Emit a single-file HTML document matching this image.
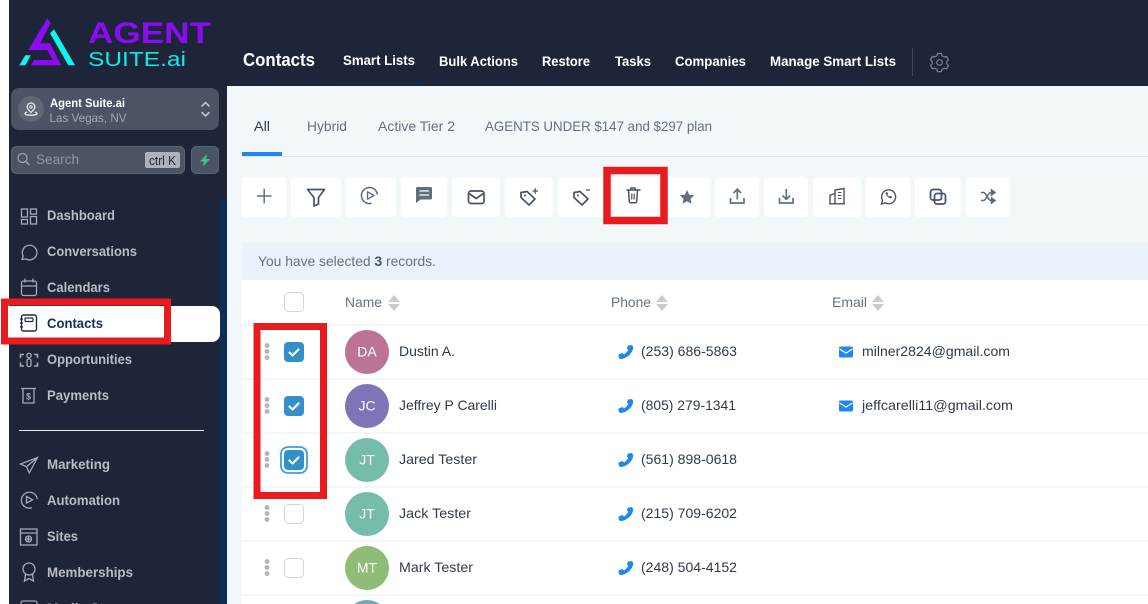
<!DOCTYPE html>
<html lang="en"><head><meta charset="utf-8"><title>Contacts</title>
<style>
html,body{margin:0;padding:0;background:#fff;width:1148px;height:604px;overflow:hidden}
svg{display:block}
text{font-family:"Liberation Sans",sans-serif}
.nav{font-size:14px;font-weight:bold;fill:#b9bcc6}
.top{font-size:14px;font-weight:bold;fill:#fff}
.tab{font-size:14px;fill:#667085}
.hd{font-size:14px;fill:#667085}
.nm{font-size:14px;fill:#2f3a4c}
.av{font-size:14px;fill:#fff;text-anchor:middle}
.si{fill:none;stroke:#a5a9b5;stroke-width:1.3}
.ti{fill:none;stroke:#475467;stroke-width:1.7;stroke-linejoin:round;stroke-linecap:round}
.btn{fill:#fff}
.cb{fill:#fff;stroke:#d0d5dd;stroke-width:1}
.ck{fill:#3490c8}
.tk{fill:none;stroke:#fff;stroke-width:2.2;stroke-linecap:round;stroke-linejoin:round}
.dot{fill:#b0b5bb}
.sep{fill:#f2f7fa}
.ph{fill:#1e88ee}
.red{fill:none;stroke:#e81c1f}
</style></head><body>
<svg width="1148" height="604" viewBox="0 0 1148 604" xmlns="http://www.w3.org/2000/svg">
<rect width="1148" height="604" fill="#fff"/>
<!-- main bg -->
<rect x="227" y="86" width="921" height="518" fill="#f2f7fa"/>
<!-- sidebar + top -->
<rect x="9" y="0" width="1139" height="86" fill="#1f2539"/>
<rect x="9" y="0" width="218" height="604" fill="#1f2539"/>
<rect x="220" y="198" width="7" height="406" fill="#0b2e55"/>
<!-- logo -->
<polygon points="47.3,18.3 50.7,23.3 40,43.3 50,43.3 61,65.3 30.7,65.3 34,60 52.7,60 47.3,50 28.3,50" fill="#8a0cf5"/>
<polygon points="19.3,65.3 25.3,65.3 30.7,55.3 25.3,55.3" fill="#0ff5f0"/>
<polygon points="54,29.3 75,65.3 68.3,65.3 50,33.3" fill="#0ff5f0"/>
<text x="88" y="43" font-size="30" font-weight="bold" fill="#8a0cf5" textLength="123" lengthAdjust="spacingAndGlyphs">AGENT</text>
<text x="88" y="66" font-size="20" fill="#0ee8e6" textLength="98" lengthAdjust="spacingAndGlyphs">SUITE.ai</text>
<!-- org -->
<rect x="11" y="88" width="208" height="42" rx="8" fill="#4b5465"/>
<circle cx="31" cy="109" r="13" fill="#5f6775"/>
<path fill="none" stroke="#e6e8ec" stroke-width="1.300" d="M31 103a3.800 3.800 0 0 1 3.800 3.800c0 2.400-3.800 5.700-3.800 5.700s-3.800-3.300-3.800-5.700A3.800 3.800 0 0 1 31 103zM27 112c-1.500.5-2 1-2 1.600 0 1 2.600 1.600 6 1.600s6-.6 6-1.600c0-.6-.5-1.100-2-1.600"/>
<circle cx="31" cy="107" r="1.200" fill="none" stroke="#e6e8ec"/>
<text x="50" y="107" font-size="12" font-weight="bold" fill="#fff" textLength="75" lengthAdjust="spacingAndGlyphs">Agent Suite.ai</text>
<text x="49.500" y="122" font-size="12" fill="#a2a7b0" textLength="77" lengthAdjust="spacingAndGlyphs">Las Vegas, NV</text>
<path d="M202 106l3.500-3.500 3.500 3.500M202 112.500l3.500 3.500 3.500-3.500" fill="none" stroke="#c9ccd3" stroke-width="1.500" stroke-linecap="round"/>
<!-- search -->
<rect x="11.500" y="146.500" width="173" height="27" rx="5" fill="#4b5465" stroke="#5a6373"/>
<circle cx="22.500" cy="158" r="4.500" fill="none" stroke="#9aa1ad" stroke-width="1.300"/>
<path d="M26 161.500l3.500 3.500" stroke="#9aa1ad" stroke-width="1.300"/>
<text x="36" y="164" font-size="14" fill="#8f97a5" textLength="43" lengthAdjust="spacingAndGlyphs">Search</text>
<rect x="145" y="152" width="35" height="16" rx="2" fill="#aeb1b9"/>
<text x="149" y="165" font-size="12.500" fill="#1f2539" textLength="27" lengthAdjust="spacingAndGlyphs">ctrl K</text>
<rect x="191.500" y="146.500" width="27" height="27" rx="5" fill="#4b5465" stroke="#5a6373"/>
<polygon points="207,154 200,161.500 204,161.500 203,166.500 210,159 206,159" fill="#37c78d"/>
<!-- nav active -->
<path d="M9 306H212a8 8 0 0 1 8 8V334a8 8 0 0 1-8 8H9z" fill="#fff"/>
<!-- nav icons -->
<g class="si">
<rect x="21.500" y="209" width="6" height="8"/><rect x="30.500" y="209" width="6" height="5"/><rect x="21.500" y="219.500" width="6" height="4.500"/><rect x="30.500" y="216.500" width="6" height="7.500"/>
<path d="M22 259.500l1.200-3.500a7.300 7.300 0 1 1 3 3z"/>
<rect x="21.500" y="281" width="15" height="14.500" rx="2"/><path d="M21.500 286h15M25 278.500v4M33 278.500v4"/>
<path d="M20.500 358v-3.500h3.500M37.500 358v-3.500h-3.500M20.500 362.500v3.500h3.500M37.500 362.500v3.500h-3.500" stroke-width="1.600"/><circle cx="29" cy="355.500" r="2.200"/><rect x="27" y="359" width="4" height="7.500" rx="1.500"/>
<path d="M21 388.500h15M23 388.500v14.500h11V388.500"/>
<path d="M37.500 457.500l-17 6.500 6 2.700 2.800 6.200zM37.500 457.500l-11 9.200"/>
<path d="M37.300 499a8 8 0 1 0-5.500 8.800"/><path d="M26.500 496.500l6 3.300-6 3.200z"/>
<rect x="20.500" y="529" width="16.500" height="16"/><path d="M20.500 533h16.500"/><circle cx="28.500" cy="539" r="3"/><path d="M25.500 539h6M28.500 536v6"/>
<circle cx="29" cy="569" r="6"/><path d="M25.500 574l-1 7 4.500-2.500 4.500 2.500-1-7"/>
<rect x="21" y="601" width="16" height="14" rx="2"/>
</g>
<text x="28.500" y="399.500" font-size="9" font-weight="bold" fill="#a5a9b5" text-anchor="middle">$</text>
<rect x="21.500" y="315" width="15" height="16" rx="2" fill="none" stroke="#1d2b4a" stroke-width="1.400"/><rect x="25" y="318" width="8" height="3.500" rx="1" fill="none" stroke="#1d2b4a" stroke-width="1.200"/><path d="M20 319h3M20 323h3M20 327h3" stroke="#1d2b4a" stroke-width="1.200"/>
<!-- nav text -->
<text class="nav" x="47" y="220" textLength="68" lengthAdjust="spacingAndGlyphs">Dashboard</text>
<text class="nav" x="47" y="256" textLength="90" lengthAdjust="spacingAndGlyphs">Conversations</text>
<text class="nav" x="47" y="292" textLength="63" lengthAdjust="spacingAndGlyphs">Calendars</text>
<text class="nav" x="47" y="328" style="fill:#14305a" textLength="56" lengthAdjust="spacingAndGlyphs">Contacts</text>
<text class="nav" x="47" y="364" textLength="85" lengthAdjust="spacingAndGlyphs">Opportunities</text>
<text class="nav" x="47" y="400" textLength="62" lengthAdjust="spacingAndGlyphs">Payments</text>
<rect x="19" y="430" width="185" height="1" fill="#e8e9ec"/>
<text class="nav" x="47" y="469" textLength="63" lengthAdjust="spacingAndGlyphs">Marketing</text>
<text class="nav" x="47" y="505" textLength="73" lengthAdjust="spacingAndGlyphs">Automation</text>
<text class="nav" x="47" y="541" textLength="31" lengthAdjust="spacingAndGlyphs">Sites</text>
<text class="nav" x="47" y="577" textLength="86" lengthAdjust="spacingAndGlyphs">Memberships</text>
<text class="nav" x="47" y="613" textLength="95" lengthAdjust="spacingAndGlyphs">Media Storage</text>
<!-- top nav -->
<text x="243" y="66" font-size="18" font-weight="bold" fill="#fff" textLength="72" lengthAdjust="spacingAndGlyphs">Contacts</text>
<text class="top" x="343" y="65" textLength="72" lengthAdjust="spacingAndGlyphs">Smart Lists</text>
<text class="top" x="439" y="66" textLength="79" lengthAdjust="spacingAndGlyphs">Bulk Actions</text>
<text class="top" x="542" y="66" textLength="48" lengthAdjust="spacingAndGlyphs">Restore</text>
<text class="top" x="615" y="66" textLength="36" lengthAdjust="spacingAndGlyphs">Tasks</text>
<text class="top" x="675" y="66" textLength="71" lengthAdjust="spacingAndGlyphs">Companies</text>
<text class="top" x="770" y="66" textLength="126" lengthAdjust="spacingAndGlyphs">Manage Smart Lists</text>
<rect x="335" y="82" width="88" height="2" fill="#0b2e55"/>
<rect x="912" y="48" width="1" height="28" fill="#444a5b"/>
<g fill="none" stroke="#7b808d" stroke-width="1.200" stroke-linejoin="round"><circle cx="939.500" cy="62.500" r="2.800"/><path d="M937.500 53.500h4l.6 2.300 2.100 1.200 2.300-.7 2 3.400-1.700 1.700v2.400l1.700 1.700-2 3.400-2.300-.7-2.100 1.200-.6 2.300h-4l-.6-2.300-2.100-1.200-2.300.7-2-3.400 1.700-1.700v-2.400l-1.700-1.700 2-3.400 2.300.7 2.100-1.200z"/></g>
<!-- tabs -->
<text class="tab" x="254" y="131" style="fill:#344054" textLength="16" lengthAdjust="spacingAndGlyphs">All</text>
<text class="tab" x="307" y="131" textLength="40" lengthAdjust="spacingAndGlyphs">Hybrid</text>
<text class="tab" x="378" y="131" textLength="77" lengthAdjust="spacingAndGlyphs">Active Tier 2</text>
<text class="tab" x="485" y="131" textLength="227" lengthAdjust="spacingAndGlyphs">AGENTS UNDER $147 and $297 plan</text>
<rect x="242" y="156" width="906" height="1" fill="#dfe5ea"/>
<rect x="242" y="152" width="40" height="4" fill="#1e88ee"/>
<!-- toolbar buttons -->
<g class="btn">
<rect x="242" y="177" width="44" height="40" rx="4"/><rect x="291" y="177" width="50" height="40" rx="4"/><rect x="346" y="177" width="50" height="40" rx="4"/><rect x="401" y="177" width="46" height="40" rx="4"/><rect x="452" y="177" width="48" height="40" rx="4"/><rect x="505" y="177" width="48" height="40" rx="4"/><rect x="558" y="177" width="50" height="40" rx="4"/><rect x="608" y="177" width="50" height="40" rx="4"/><rect x="662" y="177" width="48" height="40" rx="4"/><rect x="715" y="177" width="44" height="40" rx="4"/><rect x="764" y="177" width="44" height="40" rx="4"/><rect x="813" y="177" width="48" height="40" rx="4"/><rect x="866" y="177" width="44" height="40" rx="4"/><rect x="915" y="177" width="46" height="40" rx="4"/><rect x="966" y="177" width="44" height="40" rx="4"/>
</g>
<!-- toolbar icons -->
<path d="M257 196h14.500M264.200 188.800v14.500" stroke="#5b7089" stroke-width="1.500" fill="none"/>
<path class="ti" d="M307.500 189.500h17l-6 8v6.500l-4.500 2v-8.500z"/>
<g class="ti" style="stroke:#5a6b7c;stroke-width:1.500"><path d="M377.300 194A8 8 0 1 0 371 203.400"/><path d="M367.500 191.800l6.500 3.700-6.500 3.700z" stroke-width="1.300"/></g>
<path d="M417.500 187h13a1.500 1.500 0 0 1 1.500 1.500v9.500a1.500 1.500 0 0 1-1.500 1.500h-10l-4.500 3.500v-14.500a1.500 1.500 0 0 1 1.500-1.500z" fill="#5f6f7b"/><path d="M419.500 191h9.500M419.500 195h9.500" stroke="#fff" stroke-width="1.300"/>
<rect class="ti" x="468.500" y="191" width="15.500" height="12.500" rx="2.500"/><path class="ti" d="M469 193.500l7.200 5 7.200-5"/>
<path class="ti" d="M521 192.500l6-1 8 7.500-6 6-8-7.500z"/><circle cx="525" cy="195.500" r="1" fill="#475467"/><path d="M532.500 191h5.500M535.200 188.300v5.500" stroke="#475467" stroke-width="1.300"/>
<path class="ti" d="M574 192.500l6-1 8 7.500-6 6-8-7.500z"/><circle cx="578" cy="195.500" r="1" fill="#475467"/><path d="M586 190h4" stroke="#475467" stroke-width="1.300"/>
<g class="ti" style="stroke-width:1.500"><path d="M627 190h13M630.500 190l.5-2h4l.5 2M628.500 190l.8 11.500a1.500 1.500 0 0 0 1.500 1.200h4.400a1.500 1.500 0 0 0 1.500-1.200l.8-11.500"/><path d="M631.800 194v5M634.200 194v5" stroke-width="1.200"/></g>
<polygon points="687,190 689.200,194.700 694.300,195.300 690.500,198.800 691.500,203.800 687,201.300 682.500,203.800 683.500,198.800 679.700,195.300 684.800,194.700" fill="#5f7080"/>
<g fill="none" stroke="#5f7080" stroke-width="1.700"><path d="M730.500 198v5h13.500v-5"/><path d="M737.300 199.500v-10M733.500 193l3.800-3.800 3.800 3.800"/></g>
<g fill="none" stroke="#5f7080" stroke-width="1.700"><path d="M779.500 198v5h13.500v-5"/><path d="M786.300 189v10M782.500 195.500l3.800 3.800 3.800-3.800"/></g>
<g fill="none" stroke="#475467" stroke-width="1.400"><path d="M830 203.800v-8.500l5-1.800M835 203.800V190l9-1.500v15.300M829 203.800h16"/><path d="M838 192.500h3.500M838 195.500h3.500M838 198.500h3.500" stroke-width="1.100"/></g>
<g fill="none" stroke="#475467" stroke-width="1.400"><path d="M881.500 204l1-3.800a7 7 0 1 1 2.700 2.700z"/></g><path d="M885.500 193c1 3 2.500 4.500 5.500 5.500l1.200-1.500-2-1.200-1 .7c-.7-.4-1.400-1.100-1.800-1.800l.7-1-1.200-2z" fill="#475467"/>
<g class="ti" style="stroke:#46566e;stroke-width:1.800"><rect x="930.500" y="189.500" width="11" height="10.500" rx="2.500"/><rect x="934.500" y="193.500" width="11" height="10.500" rx="2.500"/></g>
<g fill="none" stroke="#5a6b7c" stroke-width="1.500"><path d="M981 192.500h2.500c3 0 4 8 7.500 8h3M981 200.500h2.500c3 0 4-8 7.500-8h3"/><path d="M991.500 190l3.500 2.500-3.500 2.500zM991.500 198l3.500 2.500-3.500 2.500z" fill="#5a6b7c"/></g>
<!-- selected bar -->
<rect x="242" y="243" width="906" height="37" fill="#e9f3fb"/>
<text x="258" y="266" font-size="14" fill="#667085" textLength="178" lengthAdjust="spacingAndGlyphs">You have selected <tspan font-weight="bold" fill="#475467">3</tspan> records.</text>
<!-- table -->
<rect x="242" y="280" width="906" height="324" fill="#fff"/>
<rect class="sep" x="242" y="324" width="906" height="2"/><rect class="sep" x="242" y="378" width="906" height="2"/><rect class="sep" x="242" y="432" width="906" height="2"/><rect class="sep" x="242" y="486" width="906" height="2"/><rect class="sep" x="242" y="540" width="906" height="2"/><rect class="sep" x="242" y="594" width="906" height="2"/>
<rect class="cb" x="284.500" y="292.500" width="19" height="19" rx="4"/>
<text class="hd" x="345" y="307" textLength="37" lengthAdjust="spacingAndGlyphs">Name</text>
<text class="hd" x="611" y="307" textLength="40" lengthAdjust="spacingAndGlyphs">Phone</text>
<text class="hd" x="832" y="307" textLength="35" lengthAdjust="spacingAndGlyphs">Email</text>
<g fill="#ccc"><path d="M388 302l6-7 6 7zM388 304h12l-6 7z"/><path d="M656 302l6-7 6 7zM656 304h12l-6 7z"/><path d="M872 302l6-7 6 7zM872 304h12l-6 7z"/></g>
<!-- drag dots -->
<g class="dot"><circle cx="267" cy="345.500" r="2.400"/><circle cx="267" cy="351.500" r="2.400"/><circle cx="267" cy="357.500" r="2.400"/><circle cx="267" cy="399.500" r="2.400"/><circle cx="267" cy="405.500" r="2.400"/><circle cx="267" cy="411.500" r="2.400"/><circle cx="267" cy="453.500" r="2.400"/><circle cx="267" cy="459.500" r="2.400"/><circle cx="267" cy="465.500" r="2.400"/><circle cx="267" cy="507.500" r="2.400"/><circle cx="267" cy="513.500" r="2.400"/><circle cx="267" cy="519.500" r="2.400"/><circle cx="267" cy="561.500" r="2.400"/><circle cx="267" cy="567.500" r="2.400"/><circle cx="267" cy="573.500" r="2.400"/></g>
<!-- checkboxes -->
<rect class="ck" x="284" y="342" width="20" height="20" rx="4"/><path class="tk" d="M289.500 352.500l3 3 6-6"/>
<rect class="ck" x="284" y="396" width="20" height="20" rx="4"/><path class="tk" d="M289.500 406.500l3 3 6-6"/>
<rect x="281" y="447" width="26" height="26" rx="7" fill="none" stroke="#3c9ee0" stroke-width="1.800"/>
<rect class="ck" x="284" y="450" width="20" height="20" rx="4"/><path class="tk" d="M289.500 460.500l3 3 6-6"/>
<rect class="cb" x="284.500" y="504.500" width="19" height="19" rx="4"/>
<rect class="cb" x="284.500" y="558.500" width="19" height="19" rx="4"/>
<!-- avatars -->
<circle cx="367" cy="352" r="22" fill="#bb7396"/><text class="av" x="367" y="356.500">DA</text>
<circle cx="367" cy="406" r="22" fill="#8074b9"/><text class="av" x="367" y="410.500">JC</text>
<circle cx="367" cy="460" r="22" fill="#75bcab"/><text class="av" x="367" y="464.500">JT</text>
<circle cx="367" cy="514" r="22" fill="#75bcab"/><text class="av" x="367" y="518.500">JT</text>
<circle cx="367" cy="568" r="22" fill="#8fbc76"/><text class="av" x="367" y="572.500">MT</text>
<circle cx="367" cy="622" r="22" fill="#74aab5"/>
<!-- names -->
<text class="nm" x="399" y="356" textLength="56" lengthAdjust="spacingAndGlyphs">Dustin A.</text>
<text class="nm" x="399" y="410" textLength="98" lengthAdjust="spacingAndGlyphs">Jeffrey P Carelli</text>
<text class="nm" x="399" y="464" textLength="78" lengthAdjust="spacingAndGlyphs">Jared Tester</text>
<text class="nm" x="399" y="518" textLength="72" lengthAdjust="spacingAndGlyphs">Jack Tester</text>
<text class="nm" x="399" y="572" textLength="74" lengthAdjust="spacingAndGlyphs">Mark Tester</text>
<!-- phones -->
<defs><path id="ph" d="M628 345.500l4-.5 1.200 2c0 6-6.700 12-12.700 12l-1.700-1-.3-3.500 4-1.500 1.500 1.500c1.500-.8 3.500-3 4.300-4.700l-1.500-1.300z"/></defs>
<use href="#ph" class="ph"/><use href="#ph" class="ph" y="54"/><use href="#ph" class="ph" y="108"/><use href="#ph" class="ph" y="162"/><use href="#ph" class="ph" y="216"/>
<text class="nm" x="641" y="356" textLength="96" lengthAdjust="spacingAndGlyphs">(253) 686-5863</text>
<text class="nm" x="641" y="410" textLength="95" lengthAdjust="spacingAndGlyphs">(805) 279-1341</text>
<text class="nm" x="641" y="464" textLength="96" lengthAdjust="spacingAndGlyphs">(561) 898-0618</text>
<text class="nm" x="641" y="518" textLength="96" lengthAdjust="spacingAndGlyphs">(215) 709-6202</text>
<text class="nm" x="641" y="572" textLength="96" lengthAdjust="spacingAndGlyphs">(248) 504-4152</text>
<!-- emails -->
<rect x="839" y="346.500" width="14" height="11" rx="1.500" fill="#1e88ee"/><path d="M839.500 349l6.500 4 6.500-4" fill="none" stroke="#fff" stroke-width="1.200"/>
<rect x="839" y="400.500" width="14" height="11" rx="1.500" fill="#1e88ee"/><path d="M839.500 403l6.500 4 6.500-4" fill="none" stroke="#fff" stroke-width="1.200"/>
<text class="nm" x="862" y="356" textLength="148" lengthAdjust="spacingAndGlyphs">milner2824@gmail.com</text>
<text class="nm" x="862" y="410" textLength="151" lengthAdjust="spacingAndGlyphs">jeffcarelli11@gmail.com</text>
<!-- red highlight boxes -->
<rect class="red" x="607" y="170.500" width="57" height="50" stroke-width="7.500"/>
<rect class="red" x="4.500" y="302" width="163" height="39" stroke-width="7"/>
<rect class="red" x="257" y="326.500" width="66.500" height="169" stroke-width="7"/>
</svg>
</body></html>
